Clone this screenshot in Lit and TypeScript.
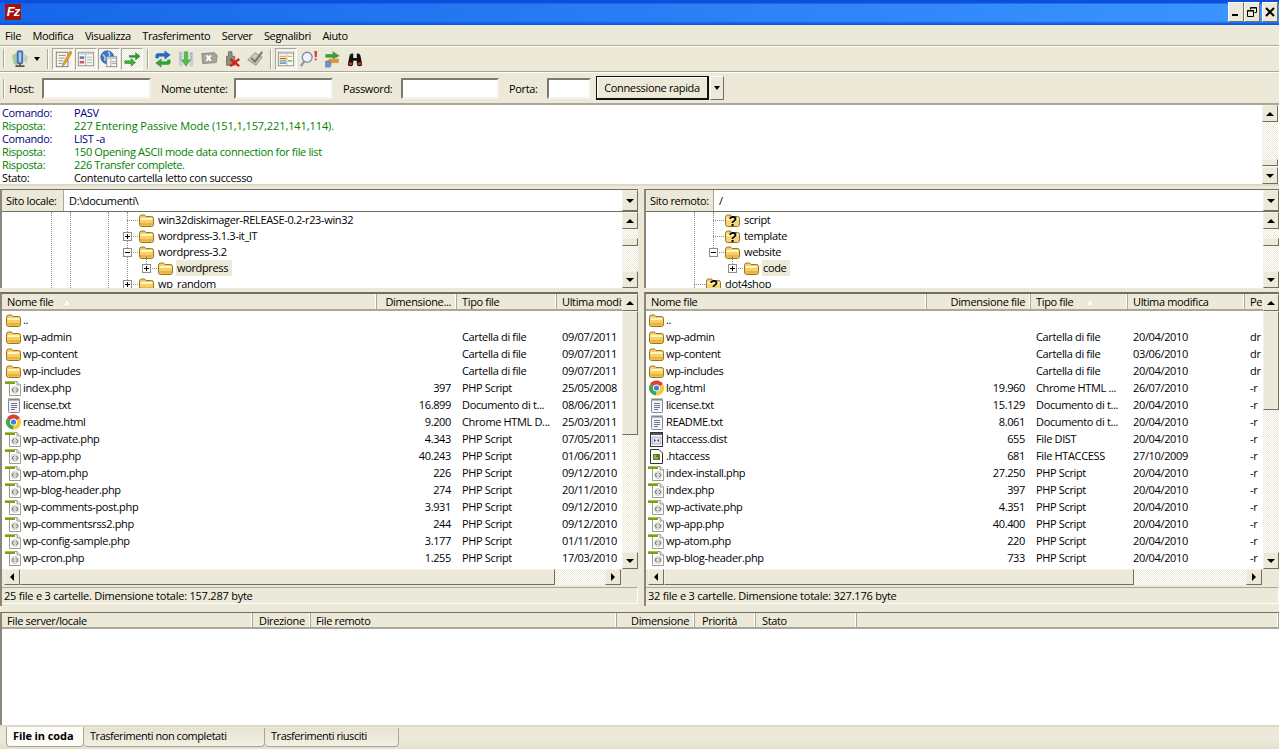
import { LitElement, html, css } from 'lit';

type Row = [string, string, string, string, string, string?];

// left and right file listings: icon, name, size, type, date, perms
const LOCAL: Row[] = [
  ['folder', '..', '', '', ''],
  ['folder', 'wp-admin', '', 'Cartella di file', '09/07/2011'],
  ['folder', 'wp-content', '', 'Cartella di file', '09/07/2011'],
  ['folder', 'wp-includes', '', 'Cartella di file', '09/07/2011'],
  ['php', 'index.php', '397', 'PHP Script', '25/05/2008'],
  ['txt', 'license.txt', '16.899', 'Documento di t...', '08/06/2011'],
  ['chrome', 'readme.html', '9.200', 'Chrome HTML D...', '25/03/2011'],
  ['php', 'wp-activate.php', '4.343', 'PHP Script', '07/05/2011'],
  ['php', 'wp-app.php', '40.243', 'PHP Script', '01/06/2011'],
  ['php', 'wp-atom.php', '226', 'PHP Script', '09/12/2010'],
  ['php', 'wp-blog-header.php', '274', 'PHP Script', '20/11/2010'],
  ['php', 'wp-comments-post.php', '3.931', 'PHP Script', '09/12/2010'],
  ['php', 'wp-commentsrss2.php', '244', 'PHP Script', '09/12/2010'],
  ['php', 'wp-config-sample.php', '3.177', 'PHP Script', '01/11/2010'],
  ['php', 'wp-cron.php', '1.255', 'PHP Script', '17/03/2010'],
];

const REMOTE: Row[] = [
  ['folder', '..', '', '', '', ''],
  ['folder', 'wp-admin', '', 'Cartella di file', '20/04/2010', 'dr'],
  ['folder', 'wp-content', '', 'Cartella di file', '03/06/2010', 'dr'],
  ['folder', 'wp-includes', '', 'Cartella di file', '20/04/2010', 'dr'],
  ['chrome', 'log.html', '19.960', 'Chrome HTML ...', '26/07/2010', '-r'],
  ['txt', 'license.txt', '15.129', 'Documento di t...', '20/04/2010', '-r'],
  ['txt', 'README.txt', '8.061', 'Documento di t...', '20/04/2010', '-r'],
  ['dist', 'htaccess.dist', '655', 'File DIST', '20/04/2010', '-r'],
  ['hta', '.htaccess', '681', 'File HTACCESS', '27/10/2009', '-r'],
  ['php', 'index-install.php', '27.250', 'PHP Script', '20/04/2010', '-r'],
  ['php', 'index.php', '397', 'PHP Script', '20/04/2010', '-r'],
  ['php', 'wp-activate.php', '4.351', 'PHP Script', '20/04/2010', '-r'],
  ['php', 'wp-app.php', '40.400', 'PHP Script', '20/04/2010', '-r'],
  ['php', 'wp-atom.php', '220', 'PHP Script', '20/04/2010', '-r'],
  ['php', 'wp-blog-header.php', '733', 'PHP Script', '20/04/2010', '-r'],
];

const LOG = [
  ['Comando:', 'PASV', 'cmd'],
  ['Risposta:', '227 Entering Passive Mode (151,1,157,221,141,114).', 'resp wide'],
  ['Comando:', 'LIST -a', 'cmd'],
  ['Risposta:', '150 Opening ASCII mode data connection for file list', 'resp'],
  ['Risposta:', '226 Transfer complete.', 'resp'],
  ['Stato:', 'Contenuto cartella letto con successo', 'st'],
];

// tree rows: box centre x (inside the pane), expander, icon, label, selected
type Node = [number, string, string, string, boolean?];
const LOCAL_TREE: Node[] = [
  [125, '', 'folder', 'win32diskimager-RELEASE-0.2-r23-win32'],
  [125, '+', 'folder', 'wordpress-3.1.3-it_IT'],
  [125, '-', 'folder', 'wordpress-3.2'],
  [144, '+', 'folder', 'wordpress', true],
  [125, '+', 'folder', 'wp_random'],
];
const REMOTE_TREE: Node[] = [
  [67, '', 'quest', 'script'],
  [67, '', 'quest', 'template'],
  [67, '-', 'folder', 'website'],
  [86, '+', 'folder', 'code', true],
  [48, '', 'quest', 'dot4shop'],
];

// dotted tree guides: x, top, height
type Guide = [number, number, number];
const LOCAL_GUIDES: Guide[] = [[49, 0, 80], [68, 0, 80], [106, 0, 80], [125, 0, 80], [144, 44, 12]];
const REMOTE_GUIDES: Guide[] = [[48, 0, 80], [67, 0, 40], [86, 44, 12]];

const folder = () => html`<svg class="ic" viewBox="0 0 17 16">
  <path d="M1.5 5.5 Q1.5 3 3.5 3 H6 Q7 3 7.5 4 L8 4.5 H13.5 Q15.5 4.5 15.5 6.5 V12 Q15.5 14.5 13.5 14.5 H3.5 Q1.5 14.5 1.5 12 Z" fill="#f7cf66" stroke="#94761f"/>
  <path d="M2.5 7 Q2.5 6 4 6 H13 Q14.5 6 14.5 7 V8 H2.5 Z" fill="#fff4c4"/>
  <path d="M2.5 11 H14.5 V12.5 Q14.5 13.5 13 13.5 H4 Q2.5 13.5 2.5 12.5 Z" fill="#ecb33a"/>
</svg>`;

const quest = () => html`<svg class="ic" viewBox="0 0 17 16">
  <path d="M1.5 5.5 Q1.5 3 3.5 3 H6 Q7 3 7.5 4 L8 4.5 H13.5 Q15.5 4.5 15.5 6.5 V12 Q15.5 14.5 13.5 14.5 H3.5 Q1.5 14.5 1.5 12 Z" fill="#f7d67a" stroke="#94761f"/>
  <path d="M2.5 6 H14.5 V8 H2.5 Z" fill="#fff4c4"/>
  <text x="8.5" y="13.500" text-anchor="middle" class="q">?</text>
</svg>`;

const php = () => html`<svg class="ic" viewBox="0 0 17 16">
  <path d="M4.5 1.5 H12 L15.5 5 V15.5 H4.5 Z" fill="#fff" stroke="#9a9a92"/>
  <path d="M12 1.5 V5 H15.5" fill="#e6e6e0" stroke="#9a9a92"/>
  <rect x="0" y="1" width="10" height="3" fill="#7f9e1c"/>
  <rect x="0" y="1" width="10" height="1" fill="#a9c63c"/>
  <circle cx="10" cy="10" r="4" fill="#d8d8d2"/>
  <path d="M8.8 8 L7 10 L8.8 12 M11.2 8 L13 10 L11.2 12" fill="none" stroke="#77776f"/>
</svg>`;

const txt = () => html`<svg class="ic" viewBox="0 0 17 16">
  <rect x="3.5" y="2.5" width="11" height="13" rx="1" fill="#f2f4fa" stroke="#7d87a8"/>
  <path d="M4 1 V4 M6 1 V4 M8 1 V4 M10 1 V4 M12 1 V4 M14 1 V4" stroke="#8a8468"/>
  <path d="M6 6.5 H12 M6 8.5 H12 M6 10.5 H12 M6 12.5 H10" stroke="#6b7488"/>
</svg>`;

const chrome = () => html`<svg class="ic" viewBox="0 0 17 16">
  <path d="M8.5 8 L2 4.2 A7.5 7.5 0 0 1 15 4.2 Z" fill="#dc3f33"/>
  <path d="M8.5 8 L15 4.2 A7.5 7.5 0 0 1 8 15.5 Z" fill="#f5c938"/>
  <path d="M8.5 8 L8 15.5 A7.5 7.5 0 0 1 2 4.2 Z" fill="#3fa64b"/>
  <circle cx="8.5" cy="8" r="3.6" fill="#fff"/>
  <circle cx="8.5" cy="8" r="2.6" fill="#3f7fe0"/>
</svg>`;

const dist = () => html`<svg class="ic" viewBox="0 0 17 16">
  <rect x="2.5" y="1.5" width="12" height="14" fill="#fff" stroke="#333"/>
  <rect x="3" y="2" width="11" height="2" fill="#555"/>
  <rect x="4" y="6" width="9" height="7" fill="#dfe6f4" stroke="#66709a" stroke-width=".5"/>
  <path d="M6 8 L8 9.5 L6 11 Z" fill="#1f4fb0"/><path d="M11 8 L9 9.5 L11 11 Z" fill="#b02020"/>
</svg>`;

const hta = () => html`<svg class="ic" viewBox="0 0 17 16">
  <path d="M2.5 1.5 H11 L14.5 5 V15.5 H2.5 Z" fill="#fff" stroke="#333"/>
  <rect x="5" y="6" width="7" height="6" fill="#5f7f1c"/>
  <path d="M6 8 H8 M6 10 H10" stroke="#c8dc80"/>
</svg>`;

const ICONS: Record<string, () => unknown> = { folder, quest, php, txt, chrome, dist, hta };

// toolbar icons, 20x20 box
const TOOL: Record<string, unknown> = {
  site: html`<svg class="tb" viewBox="0 0 20 20">
    <path d="M1 6 L6 3 L9 8 L7 18 L3 15 Z" fill="#a9c89a"/>
    <path d="M15 4 L19 8 L17 15 L14 12 Z" fill="#c2d4b4"/>
    <rect x="7" y="1" width="6" height="14" rx="1" fill="#5b8fd6" stroke="#2f5c9f"/>
    <rect x="9" y="3" width="2" height="10" fill="#bcd4f2"/>
    <path d="M10 15 V17 M5 18 H15" stroke="#555" stroke-width="2"/>
  </svg>`,
  log: html`<svg class="tb" viewBox="0 0 20 20">
    <rect x="2.5" y="2.5" width="13" height="16" fill="#f8f6ee" stroke="#777"/>
    <path d="M5 6 H13 M5 9 H12 M5 12 H10 M5 15 H9" stroke="#8a8a8a"/>
    <path d="M18 1 L10 15 L9 18 L12 16 L20 3 Z" fill="#efa51f" stroke="#a86a10" stroke-width=".6"/>
  </svg>`,
  tree: html`<svg class="tb" viewBox="0 0 20 20">
    <rect x="1.5" y="2.5" width="17" height="15" fill="#f8f8f4" stroke="#8d8d88"/>
    <path d="M2 3 H18 V5 H2 Z" fill="#c8ccd4"/>
    <path d="M9.5 5 V17 M11 8 H17 M11 11 H17 M11 14 H17" stroke="#a5a8ae"/>
    <rect x="3" y="7" width="5" height="3" fill="#5f80c0"/><rect x="3" y="12" width="5" height="3" fill="#d85a55"/>
  </svg>`,
  remote: html`<svg class="tb" viewBox="0 0 20 20">
    <circle cx="8" cy="8" r="7" fill="#3f78c8" stroke="#244f94"/>
    <path d="M3 5 Q7 8 5 12 M9 2 Q12 5 10 8" stroke="#bcd8f4" fill="none" stroke-width="1.5"/>
    <rect x="7.5" y="7.5" width="11" height="11" fill="#f4f4f0" stroke="#8d8d88"/>
    <path d="M8 8 H18 V10 H8 Z" fill="#c2c8d2"/><path d="M12 10 V18 M13 13 H18 M13 15 H18" stroke="#a5a8ae"/>
  </svg>`,
  queue: html`<svg class="tb" viewBox="0 0 20 20">
    <path d="M7 6 H14 V3 L19 7 L14 11 V8 H7 Z" fill="#2b9c2b" stroke="#1d6b1d" stroke-width=".5"/>
    <path d="M2 12 H9 V9.5 L14 14 L9 18 V15 H2 Z" fill="#38b838" stroke="#1d6b1d" stroke-width=".5"/>
  </svg>`,
  refresh: html`<svg class="tb" viewBox="0 0 20 20">
    <path d="M2 9 V6 Q2 4 4 4 H12 V1 L18 5.5 L12 10 V7 H5 V9 Z" fill="#1f6fd0" stroke="#15509a" stroke-width=".5"/>
    <path d="M18 11 V14 Q18 16 16 16 H8 V19 L2 14.5 L8 10 V13 H15 V11 Z" fill="#2aa83a" stroke="#187a26" stroke-width=".5"/>
  </svg>`,
  filter: html`<svg class="tb" viewBox="0 0 20 20">
    <path d="M2 2 H6 V18 H2 Z M14 2 H18 V18 H14 Z" fill="#c9cfd8"/>
    <path d="M3 4 H5 M3 7 H5 M3 10 H5 M15 4 H17 M15 7 H17 M15 10 H17" stroke="#7f8ea6"/>
    <path d="M8 2 H12 V11 H15 L10 18 L5 11 H8 Z" fill="#52c04a" stroke="#2d8a2a" stroke-width=".5"/>
  </svg>`,
  cancel: html`<svg class="tb" viewBox="0 0 20 20">
    <path d="M2 4 L16 3 L19 6 L18 14 L3 15 Z" fill="#a5a39a" stroke="#8a8880"/>
    <path d="M7 6 L12 12 M12 6 L7 12" stroke="#fff" stroke-width="2.2"/>
  </svg>`,
  disconnect: html`<svg class="tb" viewBox="0 0 20 20">
    <path d="M4 7 H6 V2 H10 V7 H13 V17 H4 Z" fill="#8f8d85" stroke="#6f6d66"/>
    <path d="M8 10 L18 18 M18 10 L8 18" stroke="#d81e12" stroke-width="2.6"/>
  </svg>`,
  reconnect: html`<svg class="tb" viewBox="0 0 20 20">
    <path d="M2 11 L10 3 L18 8 L11 17 Z" fill="#c8c6bc" stroke="#8f8d85"/>
    <path d="M6 9 L10 13 L18 2" fill="none" stroke="#77756d" stroke-width="2.2"/>
  </svg>`,
  compare: html`<svg class="tb" viewBox="0 0 20 20">
    <rect x="1.5" y="2.5" width="17" height="15" fill="#fafaf4" stroke="#8d8d88"/>
    <path d="M2 3.5 H18" stroke="#c0c4cc" stroke-width="2"/>
    <path d="M3 7 H10 M12 7 H17" stroke="#e4b820" stroke-width="1.4"/>
    <path d="M3 9.5 H10" stroke="#dd4a3a" stroke-width="1.4"/>
    <path d="M3 12 H10 M12 12 H17" stroke="#4ab04a" stroke-width="1.4"/>
    <path d="M3 14.5 H10" stroke="#3a70d0" stroke-width="1.4"/>
    <path d="M11 5 V17" stroke="#b0b0aa"/>
  </svg>`,
  search: html`<svg class="tb" viewBox="0 0 20 20">
    <circle cx="8" cy="8" r="5.5" fill="#eef3f8" stroke="#7d8ea6" stroke-width="1.5"/>
    <path d="M5 12 L1 18" stroke="#8a97a8" stroke-width="2.6"/>
    <path d="M16 1 H19 L18.500 8 H16.500 Z" fill="#d83a3a"/><rect x="16.500" y="9.500" width="2" height="2" fill="#d83a3a"/>
  </svg>`,
  sync: html`<svg class="tb" viewBox="0 0 20 20">
    <path d="M3 8 V5 H11 V2 L18 6.500 L11 10 V8 Z" fill="#3f9e3a" stroke="#2a7a28" stroke-width=".5"/>
    <path d="M17 10 V14 H9 V17 L3 13 L9 9.500 V11 Z" fill="#e8962a" stroke="#b06a14" stroke-width=".5"/>
    <rect x="3" y="13" width="5" height="6" fill="#5f98dc" stroke="#3a6aa8" stroke-width=".5"/>
  </svg>`,
  find: html`<svg class="tb" viewBox="0 0 20 20">
    <path d="M2 16 L4 6 Q5 3 8 4 V9 H12 V4 Q15 3 16 6 L18 16 Q18 18 15 18 Q12 18 12 15 V12 H8 V15 Q8 18 5 18 Q2 18 2 16 Z" fill="#111"/>
    <rect x="3" y="14" width="4" height="2.500" fill="#d83a1a"/><rect x="13" y="14" width="4" height="2.500" fill="#d83a1a"/>
  </svg>`,
};

export class AppRoot extends LitElement {
  static styles = css`
    :host {
      display: flex;
      flex-direction: column;
      width: 1279px;
      height: 749px;
      overflow: hidden;
      background: #ece9d8;
      color: #000;
      font-family: 'Open Sans', 'Liberation Sans', sans-serif;
      font-size: 11px;
      line-height: 13px;
      letter-spacing: -0.35px;
    }
    * { box-sizing: border-box; }
    .ic { width: 17px; height: 16px; flex: none; display: block; }
    .tb { width: 18px; height: 18px; display: block; }
    .q { font: bold 14px 'Liberation Sans', sans-serif; fill: #000; }

    /* title bar */
    .title {
      height: 25px; flex: none; display: flex; align-items: center;
      padding: 0 1px 0 5px;
      background: linear-gradient(180deg, #0a50dc 0, #0a50dc 3px, transparent 4px, transparent 21px, #0a58e4 24px),
        linear-gradient(90deg, #1766ea, #3c95ff);
    }
    .logo {
      width: 16px; height: 16px; background: #a8100a; color: #fff; flex: none;
      font: italic bold 13px/16px 'Liberation Sans', sans-serif; text-align: center;
      letter-spacing: -1px; margin-top: -1px;
    }
    .winbtns { margin-left: auto; display: flex; margin-top: -2px; }
    .winbtn {
      width: 16px; height: 20px; background: #ece9d8;
      border: 1px solid; border-color: #fff #716f64 #716f64 #fff;
      display: flex; align-items: center; justify-content: center;
    }
    .winbtn svg { width: 10px; height: 10px; display: block; }
    .winbtn.x { margin-left: 2px; }

    /* menu and toolbars */
    .menu {
      height: 21px; flex: none; display: flex; align-items: center; gap: 11.4px; padding-left: 5px;
      border-bottom: 1px solid #aca899; box-shadow: 0 1px 0 #fff; position: relative;
    }
    .toolbar {
      height: 26px; flex: none; display: flex; align-items: center; padding-left: 3px;
      border-bottom: 1px solid #aca899;
    }
    .grip { width: 2px; height: 19px; flex: none; border-left: 1px solid #aca899; border-right: 1px solid #fff; }
    .sep { width: 2px; height: 20px; flex: none; border-left: 1px solid #aca899; border-right: 1px solid #fff; }
    .tbtn { width: 22px; height: 22px; margin-right: 1px; flex: none; display: flex; align-items: center; justify-content: center; }
    .tbtn.on {
      border: 1px solid; border-color: #aca899 #fff #fff #aca899;
      background: repeating-conic-gradient(#fff 0 25%, #ece9d8 0 50%) 0 0 / 2px 2px;
    }
    .caret { width: 0; height: 0; border: 3px solid transparent; border-top: 4px solid #000; border-bottom: 0; }
    .quick {
      height: 33px; flex: none; padding-left: 3px;
      display: grid; align-items: center;
      grid-template-columns: 6px 33px 109px 10px 73px 99px 10px 58px 98px 10px 38px 44px 5px 114px 14px;
      border-top: 1px solid #fff; border-bottom: 2px solid #aca899;
    }
    .quick input {
      height: 21px; width: 100%; background: #fff; margin: 0; outline: 0; padding: 0;
      border: 2px solid; border-color: #7b7970 #f4f2e8 #f4f2e8 #7b7970;
    }
    .go {
      height: 24px; border: 2px solid #111; border-left-width: 1px; border-top-width: 1px; background: #ece9d8; text-align: center;
      line-height: 21px; box-shadow: inset 1px 1px 0 #fff; width: 113px;
    }
    .godown {
      height: 24px; background: #ece9d8; border: 1px solid; border-color: #fff #716f64 #716f64 #fff;
      display: flex; align-items: center; justify-content: center;
    }

    /* message log */
    .log {
      height: 81px; flex: none; display: flex; background: #fff;
      border-bottom: 2px solid #dcd9c8;
    }
    .lines { flex: 1; padding: 1px 0 0 2px; }
    .line { display: grid; grid-template-columns: 72px 1fr; height: 13px; white-space: pre; }
    .line.wide span + span { letter-spacing: -0.09px; }
    .cmd { color: #000080; }
    .resp { color: #008000; }

    /* scrollbars */
    .sv { width: 16px; flex: none; display: flex; flex-direction: column; }
    .sh { height: 16px; flex: none; display: flex; }
    .track { flex: 1; background: repeating-conic-gradient(#fff 0 25%, #ece9d8 0 50%) 0 0 / 2px 2px; }
    .thumb, .sbtn {
      flex: none; background: #ece9d8;
      border: 1px solid; border-color: #f4f2e8 #716f64 #716f64 #f4f2e8;
    }
    .sbtn { width: 16px; height: 17px; display: flex; align-items: center; justify-content: center; }
    .sh .sbtn { height: 16px; }
    .arrow { width: 0; height: 0; border: 4px solid transparent; }
    .arrow.u { border-bottom: 4px solid #000; border-top: 0; }
    .arrow.d { border-top: 4px solid #000; border-bottom: 0; }
    .arrow.l { border-right: 4px solid #000; border-left: 0; }
    .arrow.r { border-left: 4px solid #000; border-right: 0; }

    /* panes */
    .panes {
      height: 417px; flex: none; margin-top: 3px;
      display: grid; grid-template-columns: 638px 635px; column-gap: 6px;
      grid-template-rows: 99px 314px; row-gap: 4px;
    }
    .site { display: flex; flex-direction: column; border-left: 2px solid #8a877a; border-top: 1px solid #716f64; background: #fff; min-width: 0; overflow: hidden; }
    .sitebar { height: 22px; flex: none; display: flex; border-bottom: 1px solid #716f64; }
    .sitelabel { background: #ece9d8; padding-left: 4px; line-height: 21px; border-right: 1px solid #aca899; flex: none; }
    .path { flex: 1; line-height: 21px; padding-left: 5px; background: #fff; white-space: pre; }
    .treewrap { flex: 1; display: flex; min-height: 0; }
    .tree { flex: 1; position: relative; overflow: hidden; min-width: 0; }
    .node { height: 16px; display: flex; align-items: center; white-space: pre; }
    .slot { width: 18px; height: 16px; flex: none; display: flex; align-items: center; justify-content: center; position: relative; }
    .dash { position: absolute; left: 9px; right: -2px; top: 8px; border-top: 1px dotted #8f8d85; }
    .box {
      width: 9px; height: 9px; border: 1px solid #8f8d85; background: #fff; position: relative; z-index: 1;
      display: flex; align-items: center; justify-content: center; color: #000;
    }
    .box i { position: absolute; left: 1px; top: 3px; width: 5px; height: 1px; background: #000; }
    .box b { position: absolute; left: 3px; top: 1px; width: 1px; height: 5px; background: #000; }
    .node .ic { margin-left: 2px; }
    .nlabel { margin-left: 2px; padding: 0 1px; height: 16px; line-height: 16px; }
    .nlabel.sel { background: #ece9d8; padding-right: 4px; }
    .guide { position: absolute; width: 0; border-left: 1px dotted #8f8d85; }

    .list { display: flex; flex-direction: column; border-left: 2px solid #8a877a; border-top: 2px solid #716f64; min-width: 0; overflow: hidden; }
    .listtop { flex: 1; display: flex; background: #fff; min-height: 0; }
    .listmain { flex: 1; min-width: 0; overflow: hidden; }
    .lhead { height: 17px; display: grid; background: #ece9d8; border-bottom: 2px solid #aca899; position: relative; }
    .hcell {
      padding: 0 4px 0 2px; white-space: pre; overflow: hidden; line-height: 15px;
      border-right: 1px solid #aca899; box-shadow: inset -1px 0 0 #fff; position: relative;
    }
    .hcell.num { text-align: right; padding-right: 5px; }
    .hcell.last { border-right: 0; box-shadow: none; padding-right: 0; }
    .sort {
      position: absolute; top: 5px; width: 0; height: 0; border: 4px solid transparent;
      border-bottom: 6px solid #fbfaf4; border-top: 0; filter: drop-shadow(0 0 .5px #8a877a);
    }
    .row { display: grid; height: 17px; align-items: center; white-space: pre; }
    .cell { padding-left: 5px; overflow: hidden; line-height: 17px; }
    .cell.name { display: flex; align-items: center; }
    .cell.name span { margin-left: 1px; }
    .cell.size { text-align: right; padding: 0 6px 0 0; }
    .hbar { display: flex; height: 16px; flex: none; padding-left: 2px; background: #ece9d8; margin-bottom: 2px; }
    .corner { width: 17px; flex: none; }
    .status {
      height: 17px; flex: none; margin-bottom: 2px; line-height: 16px; padding-left: 2px; white-space: pre;
      border: 1px solid; border-color: #aca899 #fff #fff #aca899; border-left: 0;
      letter-spacing: -0.23px;
    }

    /* queue */
    .queue {
      height: 113px; flex: none; margin-top: 6px; display: flex; flex-direction: column;
      border-left: 2px solid #8a877a; border-top: 1px solid #716f64;
    }
    .qhead {
      height: 16px; flex: none; display: grid;
      grid-template-columns: 251px 58px 306px 78px 61px 101px 1fr;
      border-bottom: 2px solid #aca899;
    }
    .qbody { flex: 1; background: #fff; }

    .tabs {
      height: 24px; flex: none; display: flex; padding: 0 0 0 6px;
      border-top: 2px solid #dcd9c8;
      background: linear-gradient(180deg, #ece9d8 60%, #e2dfce);
    }
    .tab {
      height: 19px; margin-top: 1px; line-height: 16px; padding-left: 6px; flex: none;
      border: 1px solid #a9a694; border-top: 0; border-left: 0; border-radius: 0 0 4px 4px;
      background: linear-gradient(180deg, #e6e3d2, #f2f0e4);
      letter-spacing: -0.45px;
    }
    .tab.on {
      background: #fcfbf6; font-weight: 700; border-left: 1px solid #a9a694; height: 20px; margin-top: 0;
      padding-left: 6px; line-height: 18px; letter-spacing: -0.1px;
    }
  `;

  sv(thumbAt: number, thumbH: number) {
    return html`<div class="sv">
      <div class="sbtn"><div class="arrow u"></div></div>
      <div class="track" style="flex:none;height:${thumbAt}px"></div>
      <div class="thumb" style="height:${thumbH}px"></div>
      <div class="track"></div>
      <div class="sbtn"><div class="arrow d"></div></div>
    </div>`;
  }

  sh(thumbW: number) {
    return html`<div class="sh" style="flex:1">
      <div class="sbtn"><div class="arrow l"></div></div>
      <div class="thumb" style="width:${thumbW}px"></div>
      <div class="track"></div>
      <div class="sbtn"><div class="arrow r"></div></div>
    </div>`;
  }

  node(n: Node) {
    const [cx, exp, icon, label, sel] = n;
    return html`<div class="node" style="padding-left:${cx - 9}px">
      <div class="slot"><div class="dash"></div>
        ${exp ? html`<div class="box"><i></i>${exp === '+' ? html`<b></b>` : ''}</div>` : ''}
      </div>
      ${ICONS[icon]()}
      <div class="nlabel ${sel ? 'sel' : ''}">${label}</div>
    </div>`;
  }

  site(label: string, labelW: number, path: string, nodes: Node[], guides: Guide[], at: number, h: number) {
    return html`<div class="site">
      <div class="sitebar">
        <div class="sitelabel" style="width:${labelW}px">${label}</div>
        <div class="path">${path}</div>
        <div class="sbtn" style="height:21px"><div class="arrow d"></div></div>
      </div>
      <div class="treewrap">
        <div class="tree">
          ${guides.map(([x, y, gh]) => html`<div class="guide" style="left:${x}px;top:${y}px;height:${gh}px"></div>`)}
          ${nodes.map((n) => this.node(n))}
        </div>
        ${this.sv(at, h)}
      </div>
    </div>`;
  }

  list(rows: Row[], cols: string, heads: [string, boolean][], sortAt: number, namePad: number, thumb: number, hthumb: number, status: string, perms: boolean) {
    return html`<div class="list">
      <div class="listtop">
        <div class="listmain">
          <div class="lhead" style="grid-template-columns:${cols}">
            ${heads.map(([t, num], i) => html`<div class="hcell ${num ? 'num' : ''} ${i === heads.length - 1 ? 'last' : ''}" style="padding-left:5px">${t}</div>`)}
            <div class="sort" style="left:${sortAt}px"></div>
          </div>
          ${rows.map((r) => html`<div class="row" style="grid-template-columns:${cols}">
            <div class="cell name" style="padding-left:${namePad}px">${ICONS[r[0]]()}<span>${r[1]}</span></div>
            <div class="cell size">${r[2]}</div>
            <div class="cell">${r[3]}</div>
            <div class="cell">${r[4]}</div>
            ${perms ? html`<div class="cell">${r[5]}</div>` : ''}
          </div>`)}
        </div>
        ${this.sv(0, thumb)}
      </div>
      <div class="hbar">${this.sh(hthumb)}<div class="corner"></div></div>
      <div class="status">${status}</div>
    </div>`;
  }

  render() {
    return html`
      <div class="title">
        <div class="logo">Fz</div>
        <div class="winbtns">
          <div class="winbtn"><svg viewBox="0 0 10 10"><rect x="1" y="7" width="6" height="2"/></svg></div>
          <div class="winbtn"><svg viewBox="0 0 10 10"><path d="M3.500 2.500 V.5 H9.500 V5.500 H7.500 M.5 3.500 H6.500 V9.500 H.5 Z M.5 4 H6.500 M3.500 1 H9.500" fill="none" stroke="#000"/></svg></div>
          <div class="winbtn x"><svg viewBox="0 0 10 10"><path d="M1 1 L9 9 M9 1 L1 9" stroke="#000" stroke-width="2"/></svg></div>
        </div>
      </div>
      <div class="menu">
        ${['File', 'Modifica', 'Visualizza', 'Trasferimento', 'Server', 'Segnalibri', 'Aiuto'].map((m) => html`<span>${m}</span>`)}
      </div>
      <div class="toolbar">
        <div class="grip"></div>
        <div class="tbtn" style="margin-left:4px">${TOOL.site}</div>
        <div class="tbtn" style="width:10px"><div class="caret"></div></div>
        <div class="sep" style="margin:0 3px 0 4px"></div>
        ${['log', 'tree', 'remote', 'queue'].map((k) => html`<div class="tbtn on">${TOOL[k]}</div>`)}
        <div class="sep" style="margin:0 3px"></div>
        ${['refresh', 'filter', 'cancel', 'disconnect', 'reconnect'].map((k) => html`<div class="tbtn">${TOOL[k]}</div>`)}
        <div class="sep" style="margin:0 3px"></div>
        <div class="tbtn on">${TOOL.compare}</div>
        ${['search', 'sync', 'find'].map((k) => html`<div class="tbtn">${TOOL[k]}</div>`)}
      </div>
      <div class="quick">
        <div class="grip"></div>
        <span>Host:</span><input />
        <i></i><span>Nome utente:</span><input />
        <i></i><span>Password:</span><input />
        <i></i><span>Porta:</span><input />
        <i></i><div class="go">Connessione rapida</div>
        <div class="godown"><div class="caret"></div></div>
      </div>
      <div class="log">
        <div class="lines">
          ${LOG.map(([a, b, c]) => html`<div class="line ${c}"><span>${a}</span><span>${b}</span></div>`)}
        </div>
        ${this.sv(37, 7)}
        <div style="width:1px"></div>
      </div>
      <div class="panes">
        ${this.site('Sito locale:', 62, 'D:\\documenti\\', LOCAL_TREE, LOCAL_GUIDES, 9, 8)}
        ${this.site('Sito remoto:', 68, '/', REMOTE_TREE, REMOTE_GUIDES, 9, 8)}
        ${this.list(LOCAL, '375px 80px 100px 65px', [['Nome file', false], ['Dimensione...', true], ['Tipo file', false], ['Ultima modif', false]], 61, 3, 124, 535, '25 file e 3 cartelle. Dimensione totale: 157.287 byte', false)}
        ${this.list(REMOTE, '281px 104px 97px 117px 17px', [['Nome file', false], ['Dimensione file', true], ['Tipo file', false], ['Ultima modifica', false], ['Pe', false]], 440, 2, 99, 470, '32 file e 3 cartelle. Dimensione totale: 327.176 byte', true)}
      </div>
      <div class="queue">
        <div class="qhead">
          <div class="hcell" style="padding-left:5px">File server/locale</div>
          <div class="hcell" style="padding-left:6px">Direzione</div>
          <div class="hcell" style="padding-left:5px">File remoto</div>
          <div class="hcell num">Dimensione</div>
          <div class="hcell" style="padding-left:7px">Priorità</div>
          <div class="hcell" style="padding-left:6px">Stato</div>
          <div class="hcell"></div>
        </div>
        <div class="qbody"></div>
      </div>
      <div class="tabs">
        <div class="tab on" style="width:78px">File in coda</div>
        <div class="tab" style="width:181px">Trasferimenti non completati</div>
        <div class="tab" style="width:134px">Trasferimenti riusciti</div>
      </div>
    `;
  }
}
customElements.define('app-root', AppRoot);
